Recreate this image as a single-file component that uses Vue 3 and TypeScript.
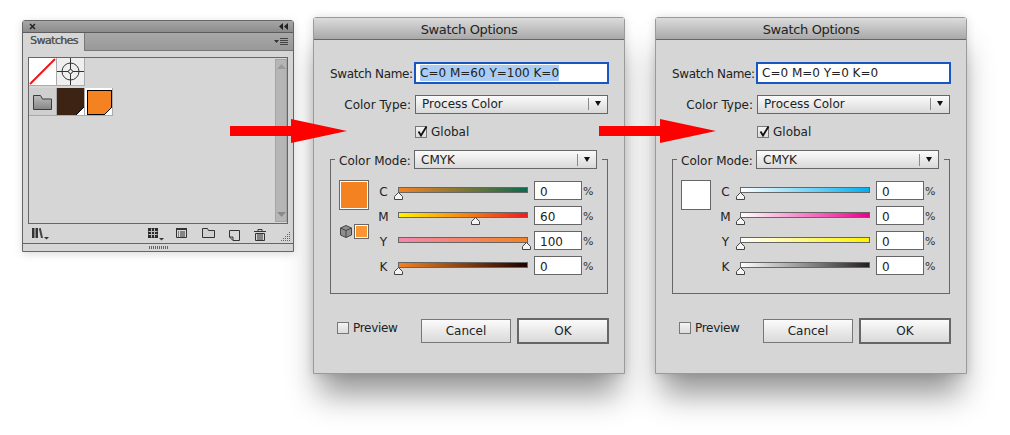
<script setup lang="ts">
interface Slider { name: string; value: number; grad: string }
interface DialogData {
  id: string; swName: string; selected: boolean; color: string; warn: boolean; sliders: Slider[]
}
const dialogs: DialogData[] = [
  {
    id: 'one', swName: 'C=0 M=60 Y=100 K=0', selected: true, color: '#f58220', warn: true,
    sliders: [
      { name: 'C', value: 0, grad: 'linear-gradient(90deg,#f58220,#0c6a4c)' },
      { name: 'M', value: 60, grad: 'linear-gradient(90deg,#fff200,#ed1c24)' },
      { name: 'Y', value: 100, grad: 'linear-gradient(90deg,#f387b0,#f58220)' },
      { name: 'K', value: 0, grad: 'linear-gradient(90deg,#f58220,#1c0000)' },
    ],
  },
  {
    id: 'two', swName: 'C=0 M=0 Y=0 K=0', selected: false, color: '#ffffff', warn: false,
    sliders: [
      { name: 'C', value: 0, grad: 'linear-gradient(90deg,#fff,#00aeef)' },
      { name: 'M', value: 0, grad: 'linear-gradient(90deg,#fff,#ec008c)' },
      { name: 'Y', value: 0, grad: 'linear-gradient(90deg,#fff,#fff200)' },
      { name: 'K', value: 0, grad: 'linear-gradient(90deg,#fff,#231f20)' },
    ],
  },
]
</script>

<template>
  <div class="desk">
    <section class="panel">
      <div class="panel-top">
        <svg width="7" height="7" viewBox="0 0 7 7"><path d="M1 1l5 5M6 1l-5 5" stroke="#222" stroke-width="1.5" /></svg>
        <svg width="9" height="7" viewBox="0 0 9 7"><path d="M4 0v7L0 3.5zM9 0v7L5 3.5z" fill="#222" /></svg>
      </div>
      <div class="panel-tabs">
        <div class="tab">Swatches</div>
        <svg class="tab-menu" width="15" height="8" viewBox="0 0 15 8">
          <path d="M0 2h5L2.500 5z" fill="#333" />
          <path d="M6 .5h8M6 2.500h8M6 4.500h8M6 6.500h8" stroke="#444" stroke-width="1" />
        </svg>
      </div>
      <div class="list">
        <div class="cells">
          <div class="row">
            <div class="cell none">
              <svg width="27" height="27" viewBox="0 0 27 27"><path d="M1 26L26 1" stroke="#f01414" stroke-width="2" /></svg>
            </div>
            <div class="cell reg">
              <svg width="27" height="27" viewBox="0 0 27 27" fill="none" stroke="#333">
                <circle cx="13.500" cy="13.500" r="8.500" />
                <circle cx="13.500" cy="13.500" r="2" />
                <path d="M13.500 0v11M13.500 16v11M0 13.500h11M16 13.500h11" />
              </svg>
            </div>
          </div>
          <div class="row second">
            <div class="cell folder">
              <svg width="19" height="15" viewBox="0 0 19 15">
                <defs><linearGradient id="fg" x1="0" y1="0" x2="0" y2="1"><stop offset="0" stop-color="#bdbdbd" /><stop offset="1" stop-color="#868686" /></linearGradient></defs>
                <path d="M.5 14.500V.5h7l2 3.500h9v10.500z" fill="url(#fg)" stroke="#3a3a3a" />
              </svg>
            </div>
            <div class="cell brown">
              <svg class="corner" width="8" height="8" viewBox="0 0 8 8"><path d="M8 0v8H0z" fill="#fff" /><path d="M8 0L0 8" stroke="#000" /></svg>
            </div>
            <div class="cell picked">
              <div class="picked-fill"></div>
              <svg class="corner" width="8" height="8" viewBox="0 0 8 8"><path d="M8 0v8H0z" fill="#fff" /><path d="M8 0L0 8" stroke="#000" /></svg>
            </div>
          </div>
        </div>
        <div class="scroll">
          <svg width="9" height="5" viewBox="0 0 9 5"><path d="M4.500 0L9 5H0z" fill="#9a9a9a" /></svg>
          <svg width="9" height="5" viewBox="0 0 9 5"><path d="M4.500 5L9 0H0z" fill="#8a8a8a" /></svg>
        </div>
      </div>
      <div class="tools">
        <svg class="t-lib" width="18" height="12" viewBox="0 0 18 12">
          <path d="M0 0h2.500v10H0zM3.500 0H6v10H3.500z" fill="#333" />
          <path d="M6.800 .5L8.800 0 11 10H9z" fill="#444" />
          <path d="M12 9h5l-2.500 2.500z" fill="#333" />
        </svg>
        <svg class="t-grid" width="16" height="13" viewBox="0 0 16 13">
          <path d="M0 0h10v10H0z" fill="#2a2a2a" />
          <path d="M.5 3.500h9M.5 6.500h9M3.500 .5v9M6.500 .5v9" stroke="#bbb" />
          <path d="M11 10h5l-2.500 2.500z" fill="#333" />
        </svg>
        <svg class="t-list" width="11" height="10" viewBox="0 0 11 10" fill="none" stroke="#333">
          <path d="M.5.500h10v9H.500z" />
          <path d="M0 1h11" stroke-width="2" />
          <path d="M2 4h1M4 4h5M2 6h1M4 6h5M2 8h1M4 8h5" />
        </svg>
        <svg class="t-folder" width="13" height="10" viewBox="0 0 13 10">
          <path d="M.5 9.500V.500h5l1 2h6v7z" fill="#d0d0d0" stroke="#333" />
        </svg>
        <svg class="t-new" width="11" height="11" viewBox="0 0 11 11">
          <path d="M.5.500h10v10H4L.5 7z" fill="#d8d8d8" stroke="#333" />
          <path d="M.5 7H4v3.500" fill="none" stroke="#333" />
        </svg>
        <svg class="t-trash" width="12" height="12" viewBox="0 0 12 12" fill="none" stroke="#333">
          <path d="M0 2.500h12M4 2V.500h4V2" />
          <path d="M1.500 4.500h9v7h-9zM4 5v6M6 5v6M8 5v6" />
        </svg>
        <svg class="t-grip" width="10" height="10" viewBox="0 0 10 10" fill="#666">
          <path d="M8 0h1v1H8zM6 2h1v1H6zM8 2h1v1H8zM4 4h1v1H4zM6 4h1v1H6zM8 4h1v1H8zM2 6h1v1H2zM4 6h1v1H4zM6 6h1v1H6zM8 6h1v1H8zM0 8h1v1H0zM2 8h1v1H2zM4 8h1v1H4zM6 8h1v1H6zM8 8h1v1H8z" />
        </svg>
      </div>
      <div class="panel-foot"><i v-for="n in 10" :key="n"></i></div>
    </section>

    <section v-for="d in dialogs" :key="d.id" class="dialog" :class="d.id">
      <header class="title">Swatch Options</header>
      <div class="body">
        <div class="name-row">
          <label class="lab lab-name">Swatch Name:</label>
          <div class="name-input"><span :class="{ sel: d.selected }">{{ d.swName }}</span></div>
        </div>
        <div class="type-row">
          <label class="lab lab-type">Color Type:</label>
          <div class="select type-sel"><span>Process Color</span><b class="caret"></b></div>
        </div>
        <div class="global">
          <span class="check">
            <svg width="12" height="12" viewBox="0 0 12 12"><path d="M2.500 5.500L5 9.500 10.500 .5" fill="none" stroke="#111" stroke-width="1.800" /></svg>
          </span>
          <span>Global</span>
        </div>
        <div class="field">
          <div class="legend">
            <label class="lab lab-mode">Color Mode:</label>
            <div class="select mode-sel"><span class="mode-text">CMYK</span><b class="caret"></b></div>
          </div>
          <div class="mix">
            <div class="chips">
              <div class="chip" :style="{ background: d.color }"></div>
              <div v-if="d.warn" class="warn">
                <svg width="12" height="13" viewBox="0 0 12 13">
                  <path d="M6 .5L11.500 3v7L6 12.500.5 10V3z" fill="#8e8e8e" stroke="#444" />
                  <path d="M.5 3L6 5.500 11.500 3M6 5.500v7" fill="none" stroke="#444" />
                </svg>
                <div class="mini"></div>
              </div>
            </div>
            <div class="sliders">
              <div v-for="s in d.sliders" :key="s.name" class="s-row">
                <span class="s-name">{{ s.name }}</span>
                <div class="track" :style="{ background: s.grad }">
                  <svg class="thumb" :style="{ left: s.value + '%' }" width="9" height="8" viewBox="0 0 9 8">
                    <path d="M4.500.5L8.500 4.500V7.500H.5V4.500z" fill="#f4f4f4" stroke="#444" />
                  </svg>
                </div>
                <div class="num">{{ s.value }}</div>
                <span class="pct">%</span>
              </div>
            </div>
          </div>
        </div>
        <div class="actions">
          <div class="preview"><span class="check"></span><span>Preview</span></div>
          <button class="btn cancel">Cancel</button>
          <button class="btn ok">OK</button>
        </div>
      </div>
    </section>

    <svg class="arrow a1" width="117" height="24" viewBox="0 0 117 24"><path d="M0 7h61V0l56 12-56 12v-7H0z" fill="#fe0000" /></svg>
    <svg class="arrow a2" width="117" height="24" viewBox="0 0 117 24"><path d="M0 7h61V0l56 12-56 12v-7H0z" fill="#fe0000" /></svg>
  </div>
</template>

<style>
html, body { margin: 0; background: #fff; }
</style>

<style scoped>
.desk {
  position: relative; width: 1010px; height: 435px; overflow: hidden; background: #fff;
  font-family: "DejaVu Sans", sans-serif; font-size: 12px; color: #222;
}
.desk * { box-sizing: border-box; }

/* swatches panel */
.panel {
  position: absolute; left: 22px; top: 20px; width: 272px; height: 232px;
  display: flex; flex-direction: column; background: #d6d6d6; border: 1px solid #666;
  border-radius: 3px 3px 0 0; box-shadow: 0 2px 8px rgba(0,0,0,.15);
}
.panel-top {
  height: 12px; flex: none; display: flex; justify-content: space-between; align-items: center;
  padding: 0 5px 0 6px; background: linear-gradient(#a6a6a6,#8b8b8b); border-bottom: 1px solid #5c5c5c;
}
.panel-tabs {
  height: 18px; flex: none; display: flex; background: linear-gradient(#a8a8a8,#999); position: relative;
  border-bottom: 1px solid #777;
}
.tab {
  width: 62px; height: 18px; background: #d6d6d6; border-right: 1px solid #777;
  font-size: 11px; color: #555; padding: 1px 0 0 7px; line-height: 14px;
  letter-spacing: -.6px; white-space: nowrap; text-shadow: .35px 0 0 #555;
}
.tab-menu { position: absolute; right: 4px; top: 5px; }
.list {
  margin: 6px 5px 0; height: 167px; flex: none; border: 1px solid #666; display: flex;
  justify-content: space-between; position: relative;
}
.row { display: flex; }
.second { margin-top: 2px; }
.cell { width: 28px; height: 28px; position: relative; border: 1px solid #aaa; border-width: 0 1px 1px 0; }
.none { background: #fff; }
.reg { background: #efefef; }
.folder { background: #cfcfcf; display: flex; align-items: center; justify-content: center; padding-top: 1px; }
.brown { background: #3d2314; }
.picked { background: #fff; padding: 2px; }
.picked-fill { width: 25px; height: 25px; background: #f58220; border: 1px solid #000; }
.corner { position: absolute; right: 0; bottom: 0; }
.scroll {
  width: 12px; margin: 1px 0; background: #b6b6b6; border: 1px solid #a5a5a5; display: flex;
  flex-direction: column; justify-content: space-between; align-items: center; padding: 4px 0;
}
.tools { flex: none; height: 19px; position: relative; display: flex; align-items: center; padding-left: 9px; }
.t-lib { flex: none; margin-top: 1px; }
.t-grid { flex: none; margin-left: 98px; margin-top: 2px; }
.t-list { flex: none; margin-left: 12px; margin-top: -1px; }
.t-folder { flex: none; margin-left: 15px; margin-top: -1px; }
.t-new { flex: none; margin-left: 14px; margin-top: 4px; }
.t-trash { flex: none; margin-left: 14px; margin-top: 3px; }
.t-grip { position: absolute; right: 2px; bottom: 1px; }
.panel-foot {
  flex: 1; border-top: 1px solid #666; display: flex; justify-content: center; align-items: center; gap: 1px;
}
.panel-foot i { width: 1px; height: 3px; background: #666; }

/* dialogs */
.dialog {
  position: absolute; top: 17px; width: 312px; height: 357px; background: #d6d6d6;
  border: 1px solid #9a9a9a; border-radius: 3px 3px 0 0;
  box-shadow: 0 26px 30px -6px rgba(0,0,0,.42), 0 0 10px rgba(0,0,0,.12);
}
.one { left: 313px; }
.two { left: 655px; }
.title {
  height: 22px; border-bottom: 1px solid #666; background: linear-gradient(#dcdcdc,#a8a8a8);
  text-align: center; font-size: 13px; line-height: 23px; color: #222; letter-spacing: -.35px;
}
.body { padding: 22px 0 0 16px; }
.lab { display: block; text-align: right; white-space: nowrap; flex: none; }
.name-row { display: flex; align-items: center; height: 22px; }
.lab-name { width: 81px; letter-spacing: -.35px; margin-top: 2px; }
.name-input {
  width: 195px; height: 22px; margin-left: 3px; background: #fff; border: 2px solid #1a55c4;
  padding-left: 4px; line-height: 18px; font-size: 12px; white-space: nowrap;
}
.sel { background: #a9cdf4; display: inline-block; height: 16px; line-height: 16px; vertical-align: top; margin-top: 1px; }
.type-row { display: flex; align-items: center; height: 20px; margin-top: 10px; }
.lab-type { width: 81px; margin-top: 2px; }
.select {
  display: flex; justify-content: space-between; align-items: center; height: 19px;
  background: linear-gradient(#fbfbfb,#d9d9d9); border: 1px solid #666; padding-left: 6px; position: relative;
}
.type-sel { width: 193px; margin-left: 4px; }
.caret { width: 19px; height: 12px; border-left: 1px solid #8a8a8a; position: relative; }
.caret::after {
  content: ""; position: absolute; left: 6px; top: 3px; border: 3.500px solid transparent;
  border-top: 5px solid #111; border-bottom: 0;
}
.global { display: flex; align-items: center; gap: 4px; margin: 11px 0 0 85px; height: 13px; }
.check {
  width: 12px; height: 12px; flex: none; background: linear-gradient(#f4f4f4,#dcdcdc); border: 1px solid #777; position: relative;
}
.check svg { position: absolute; left: 0; top: -1px; }
.field { width: 278px; height: 135px; margin-top: 21px; border: 1px solid #666; }
.legend {
  display: flex; align-items: center; width: 267px; height: 19px; margin: -10px 0 0 4px; background: #d6d6d6;
  padding-left: 4px;
}
.lab-mode { width: 71px; margin-top: 3px; }
.mode-sel { width: 183px; height: 19px; margin-left: 4px; }
.mode-text { margin-top: 1px; }
.mix { display: flex; margin: 11px 0 0 8px; }
.chips { width: 30px; flex: none; }
.chip { width: 30px; height: 30px; border: 1px solid #666; outline: 1px solid #fff; outline-offset: -2px; }
.two .chip { outline: none; }
.warn { display: flex; align-items: center; justify-content: space-between; margin-top: 14px; padding-left: 1px; }
.mini { width: 15px; height: 15px; background: #fa9632; border: 1px solid #666; outline: 1px solid #fff; outline-offset: -2px; }
.sliders { margin-top: 1px; }
.s-row { display: flex; height: 19px; margin-bottom: 6px; }
.s-name { width: 29px; text-align: center; line-height: 23px; font-size: 12px; }
.track { width: 130px; height: 6px; margin-top: 6px; border: 1px solid #666; position: relative; }
.thumb { position: absolute; margin-left: -5px; top: 4px; }
.num {
  width: 48px; height: 19px; margin-left: 6px; background: #fff; border: 1px solid #666;
  padding-left: 5px; line-height: 20px;
}
.pct { margin-left: 1px; font-size: 11px; line-height: 21px; color: #333; }
.actions { display: flex; align-items: center; height: 26px; margin-top: 24px; }
.preview { display: flex; align-items: center; gap: 4px; width: 84px; height: 12px; line-height: 12px; margin-left: 7px; align-self: flex-start; margin-top: 4px; font-size: 12px; letter-spacing: -.3px; }
.btn {
  font: 12px "DejaVu Sans", sans-serif; color: #222; background: linear-gradient(#fbfbfb,#d9d9d9);
  border: 1px solid #777; padding: 0;
}
.cancel { width: 90px; height: 24px; }
.ok { width: 92px; height: 26px; margin-left: 6px; border: 2px solid #666; }

.arrow { position: absolute; top: 119px; }
.a1 { left: 230px; }
.a2 { left: 599px; }
</style>
